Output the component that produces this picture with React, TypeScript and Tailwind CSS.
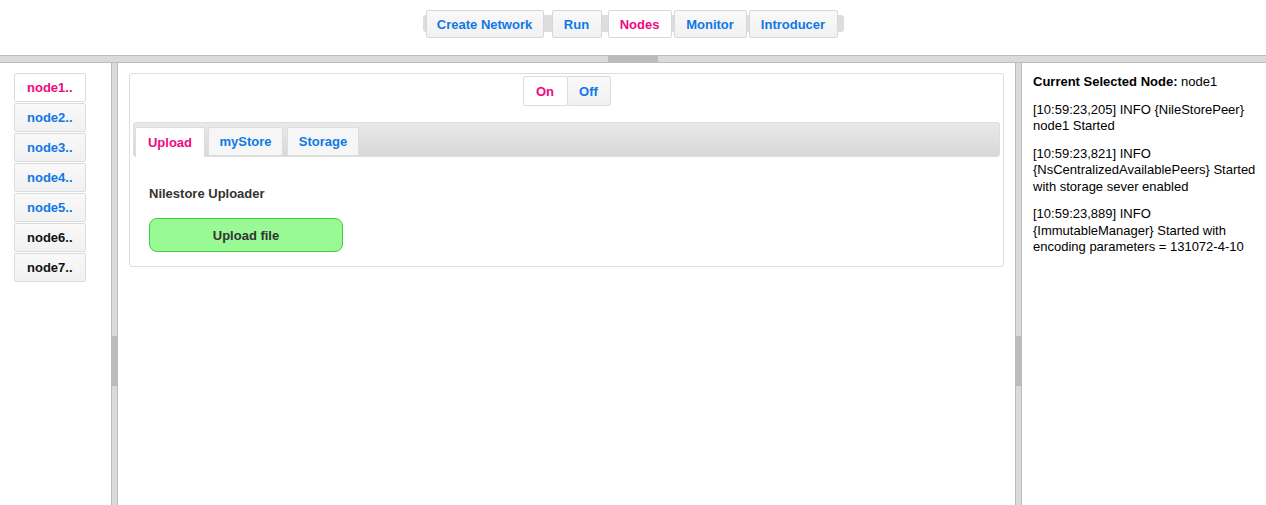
import React from "react";

const BLUE = "text-[#0f78e6]";
const PINK = "text-[#f0087f]";

function NavBtn({ label, active, cls }: { label: string; active?: boolean; cls?: string }) {
  return (
    <div
      className={`relative h-[28px] flex items-center justify-center border border-[#d8d8d8] rounded-[2px] text-[13px] font-bold ${
        active ? `bg-white ${PINK}` : `bg-gradient-to-b from-[#f9f9f9] to-[#f1f1f1] ${BLUE}`
      } ${cls ?? ""}`}
    >
      <span className="pt-[1px]">{label}</span>
    </div>
  );
}

function NodeBtn({ label, color, active }: { label: string; color: string; active?: boolean }) {
  return (
    <div
      className={`w-[72px] h-[29px] pl-[12px] pt-[1px] flex items-center border border-[#dcdcdc] rounded-[2px] text-[13px] font-bold ${color} ${
        active ? "bg-white" : "bg-gradient-to-b from-[#f9f9f9] to-[#f1f1f1]"
      }`}
    >
      {label}
    </div>
  );
}

function VResizer() {
  return (
    <div className="w-[7px] shrink-0 bg-[#dadada] border-x border-[#bcbcbc] flex flex-col">
      <div className="mt-[273px] h-[50px] bg-[#bbbbbb]" />
    </div>
  );
}

export default function App() {
  return (
    <div
      className="w-[1266px] h-[505px] overflow-hidden bg-white flex flex-col text-[13px]"
      style={{ fontFamily: '"Liberation Sans", Arial, sans-serif' }}
    >
      {/* top pane */}
      <div className="h-[55px] shrink-0 flex justify-center pt-[10px]">
        <div className="relative flex items-start h-[28px] pl-[3px] pr-[6px]">
          <div className="absolute left-0 right-0 top-[5px] h-[17px] bg-[#dddddd] rounded-[3px]" />
          <NavBtn label="Create Network" cls="w-[118px]" />
          <NavBtn label="Run" cls="ml-[8px] w-[50px]" />
          <NavBtn label="Nodes" active cls="ml-[6px] w-[64px]" />
          <NavBtn label="Monitor" cls="ml-[2px] w-[73px]" />
          <NavBtn label="Introducer" cls="ml-[2px] w-[89px]" />
        </div>
      </div>

      {/* horizontal resizer */}
      <div className="h-[8px] shrink-0 bg-[#dadada] border-y border-[#bcbcbc] flex justify-center">
        <div className="w-[50px] h-full bg-[#bbbbbb] ml-[-1px]" />
      </div>

      {/* panes */}
      <div className="flex-1 flex min-h-0">
        {/* west */}
        <div className="w-[111px] shrink-0 bg-white pl-[14px] pt-[10px] flex flex-col gap-[1px]">
          <NodeBtn label="node1.." color={PINK} active />
          <NodeBtn label="node2.." color={BLUE} />
          <NodeBtn label="node3.." color={BLUE} />
          <NodeBtn label="node4.." color={BLUE} />
          <NodeBtn label="node5.." color={BLUE} />
          <NodeBtn label="node6.." color="text-[#111]" />
          <NodeBtn label="node7.." color="text-[#111]" />
        </div>

        <VResizer />

        {/* center */}
        <div className="flex-1 min-w-0 bg-white px-[11px] pt-[10px]">
          <div className="border border-[#dddddd] rounded-[3px] pt-[2px] px-[3px] pb-[3px]">
            <div className="flex justify-center">
              <div
                className={`h-[30px] w-[45px] pt-[1px] flex items-center justify-center border border-[#dcdcdc] rounded-[2px] bg-white font-bold ${PINK}`}
              >
                On
              </div>
              <div
                className={`h-[30px] w-[44px] pt-[1px] -ml-[1px] flex items-center justify-center border border-[#dcdcdc] rounded-[2px] bg-gradient-to-b from-[#f9f9f9] to-[#f1f1f1] font-bold ${BLUE}`}
              >
                Off
              </div>
            </div>

            <div className="mt-[16px]">
              <div className="h-[35px] pt-[4px] pl-[1px] flex gap-[3px] border border-[#dddddd] rounded-[3px] bg-gradient-to-b from-[#e9e9e9] to-[#d8d8d8]">
                <div className={`h-[30px] w-[70px] pt-[1px] flex items-center justify-center bg-white border border-b-0 border-[#dddddd] rounded-t-[2px] font-bold ${PINK}`}>
                  Upload
                </div>
                <div className={`h-[29px] w-[75px] pt-[1px] flex items-center justify-center bg-[#f6f6f6] border border-[#dddddd] rounded-t-[2px] font-bold ${BLUE}`}>
                  myStore
                </div>
                <div className={`h-[29px] w-[72px] pt-[1px] ml-[1px] flex items-center justify-center bg-[#f6f6f6] border border-[#dddddd] rounded-t-[2px] font-bold ${BLUE}`}>
                  Storage
                </div>
              </div>
              <div className="pt-[29px] px-[16px] pb-[11px]">
                <div className="leading-[16px] font-bold text-[#333]">Nilestore Uploader</div>
                <div className="mt-[16px] w-[194px] h-[34px] pt-[1px] flex items-center justify-center bg-[#99f994] border border-[#3ccf3c] rounded-[8px] font-bold text-[#333]">
                  Upload file
                </div>
              </div>
            </div>
          </div>
        </div>

        <VResizer />

        {/* east */}
        <div className="w-[244px] shrink-0 bg-white pl-[11px] pr-[6px] pt-[11px] text-black leading-[16.5px]">
          <p className="mb-[11px]">
            <span className="font-bold">Current Selected Node:</span> node1
          </p>
          <p className="mb-[11px]">[10:59:23,205] INFO {"{NileStorePeer}"} node1 Started</p>
          <p className="mb-[11px]">
            [10:59:23,821] INFO {"{NsCentralizedAvailablePeers}"} Started with storage sever enabled
          </p>
          <p className="mb-[11px]">
            [10:59:23,889] INFO {"{ImmutableManager}"} Started with encoding parameters = 131072-4-10
          </p>
        </div>
      </div>
    </div>
  );
}
